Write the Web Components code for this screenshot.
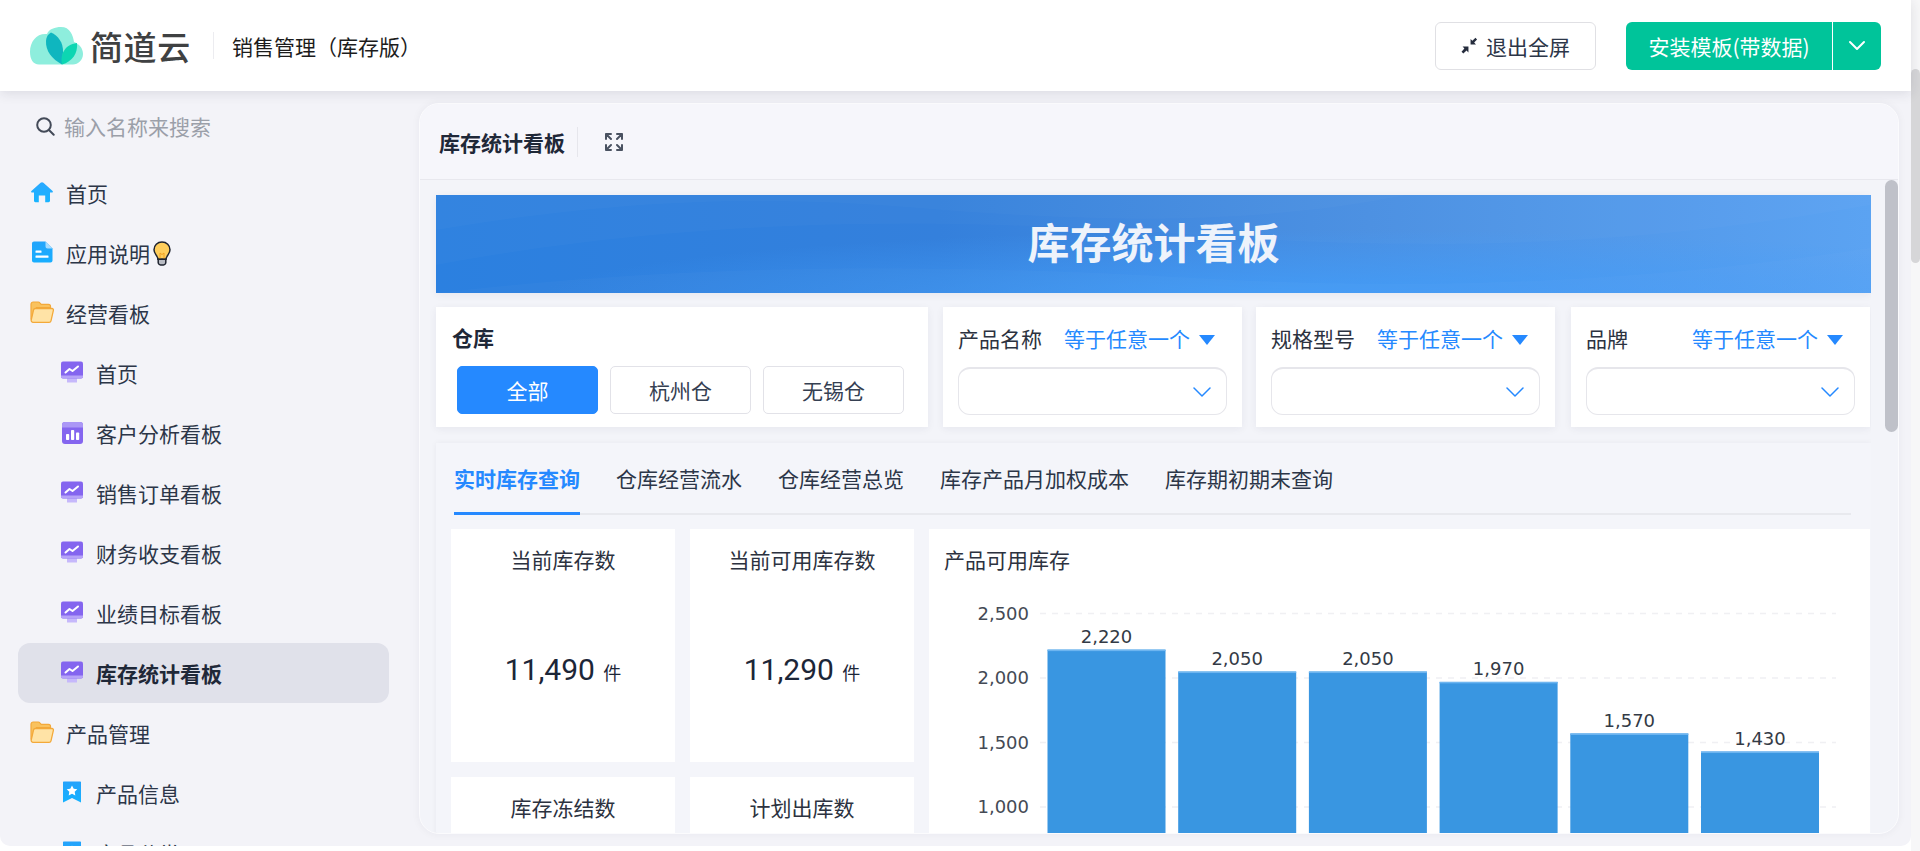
<!DOCTYPE html>
<html lang="zh-CN">
<head>
<meta charset="utf-8">
<title>库存统计看板</title>
<style>
  html, body { margin: 0; height: 851px; overflow: hidden; background: #fff; }
  body { display: flex; font-family: "Noto Sans CJK SC", "Noto Sans", sans-serif; font-size: 21px; color: #2c3648; }
  #page { width: 1911px; display: flex; flex-direction: column; }
</style>
</head>
<body>
<div id="page">
  <app-header title-text="销售管理（库存版）"></app-header>
  <app-shell>
    <side-nav slot="side">
      <nav-item icon="home">首页</nav-item>
      <nav-item icon="doc">应用说明<icon-bulb></icon-bulb></nav-item>
      <nav-item icon="folder">经营看板</nav-item>
      <nav-item icon="monitor" level="2">首页</nav-item>
      <nav-item icon="bars" level="2">客户分析看板</nav-item>
      <nav-item icon="monitor" level="2">销售订单看板</nav-item>
      <nav-item icon="monitor" level="2">财务收支看板</nav-item>
      <nav-item icon="monitor" level="2">业绩目标看板</nav-item>
      <nav-item icon="monitor" level="2" active>库存统计看板</nav-item>
      <nav-item icon="folder">产品管理</nav-item>
      <nav-item icon="bookmark" level="2">产品信息</nav-item>
      <nav-item icon="bookmark" level="2">产品分类</nav-item>
    </side-nav>
    <board-card title-text="库存统计看板">
      <board-banner>库存统计看板</board-banner>
      <filter-row>
        <filter-buttons label="仓库" options="全部,杭州仓,无锡仓"></filter-buttons>
        <filter-select label="产品名称"></filter-select>
        <filter-select label="规格型号" style="margin: 0 1px 0 -1px"></filter-select>
        <filter-select label="品牌"></filter-select>
      </filter-row>
      <tab-panel tabs="实时库存查询,仓库经营流水,仓库经营总览,库存产品月加权成本,库存期初期末查询">
        <stat-card label="当前库存数" value="11,490" unit="件"></stat-card>
        <stat-card label="当前可用库存数" value="11,290" unit="件"></stat-card>
        <bar-chart label="产品可用库存" values="2220,2050,2050,1970,1570,1430"></bar-chart>
        <stat-card label="库存冻结数"></stat-card>
        <stat-card label="计划出库数"></stat-card>
      </tab-panel>
    </board-card>
  </app-shell>
</div>
<page-scrollbar></page-scrollbar>

<script>
// Sidebar icons, all on a 24 x 24 box
const ICONS = {
  home: `<defs><linearGradient id="g" x1="0" y1="0" x2="0" y2="1"><stop offset="0" stop-color="#2aa8ff"/><stop offset="1" stop-color="#18b4ff"/></linearGradient></defs>
    <path fill="url(#g)" d="M10.6 2.8c.8-.7 2-.7 2.8 0l9.2 8.2c.6.6.2 1.6-.7 1.6H20v8.2c0 .8-.6 1.4-1.4 1.4h-3.4v-6.6H8.8v6.6H5.4c-.8 0-1.4-.6-1.4-1.4v-8.2H2.100c-.9 0-1.300-1-.7-1.600z"/>`,
  doc: `<defs><linearGradient id="g" x1="0" y1="0" x2="0" y2="1"><stop offset="0" stop-color="#22a4fb"/><stop offset="1" stop-color="#18aeff"/></linearGradient></defs>
    <path fill="url(#g)" d="M4 1.500h11.500L22.500 8.500V20.500c0 1.100-.9 2-2 2H4c-1.100 0-2-.9-2-2v-17c0-1.100.9-2 2-2z"/>
    <path fill="#a5dcff" d="M15.500 1.500l7 7h-5c-1.100 0-2-.9-2-2z"/>
    <rect x="5.500" y="10.500" width="6" height="2.200" rx=".5" fill="#fff"/><rect x="5.500" y="15.500" width="13" height="2.200" rx=".5" fill="#fff"/>`,
  folder: `<path fill="#f9c25f" stroke="#f3a93a" stroke-width="1.200" d="M1 19.500V4.200C1 3 2 2 3.200 2h5c.7 0 1.300.3 1.700.8l1.300 1.500h7.300c1.100 0 2 .9 2 2v1.200H6.500z"/>
    <path fill="#ffe3a6" stroke="#f3a93a" stroke-width="1.300" stroke-linejoin="round" d="M5.500 8.500h16.500c1 0 1.600.9 1.400 1.800L21 20.800c-.2.900-1 1.500-1.900 1.500H3c-1.100 0-2-1-1.800-2.100L3.500 10c.2-.9 1-1.500 2-1.500z"/>`,
  monitor: `<path fill="#c6b8fb" d="M7 18h10v4.500H7z"/><rect x="1" y="1.500" width="22" height="17" rx="2" fill="#8465ef"/><path fill="#b6a3f8" d="M1 15.500h22v1c0 1.100-.9 2-2 2H3c-1.100 0-2-.9-2-2z"/>
    <path fill="none" stroke="#fff" stroke-width="2" stroke-linecap="round" stroke-linejoin="round" d="M5.500 12.500l4-3.500 3 2 5.500-4.500"/>`,
  bars: `<rect x="2" y="2" width="21" height="22" rx="3" fill="#8465ef"/><path fill="#ab97f6" d="M5 2h15a3 3 0 0 1 3 3v2.500H2V5a3 3 0 0 1 3-3z"/>
    <rect x="6" y="14" width="3.200" height="6" rx=".8" fill="#fff"/><rect x="11" y="10" width="3.200" height="10" rx=".8" fill="#fff"/><rect x="16" y="12.500" width="3.200" height="7.500" rx=".8" fill="#fff"/>`,
  bookmark: `<defs><linearGradient id="g" x1="0" y1="0" x2="0" y2="1"><stop offset="0" stop-color="#25a2fb"/><stop offset="1" stop-color="#16b2ff"/></linearGradient></defs>
    <path fill="url(#g)" d="M4 1.500h16c.6 0 1 .4 1 1v20l-9-4.500-9 4.500v-20c0-.6.4-1 1-1z"/>
    <path fill="#fff" d="M12 5.500l1.700 3.200 3.600.6-2.600 2.500.6 3.600-3.300-1.700-3.300 1.700.6-3.600-2.600-2.500 3.600-.6z"/>`
};

class AppHeader extends HTMLElement {
  constructor() {
    super();
    this.attachShadow({ mode: 'open' });
  }

  connectedCallback() {
    this.shadowRoot.innerHTML = `
      <style>
        :host { display: flex; align-items: center; height: 91px; padding: 0 30px; box-sizing: border-box; background: #fff; box-shadow: 0 2px 12px rgba(30, 35, 60, .12); position: relative; z-index: 2; }
        .brand { font-size: 33px; font-weight: 500; line-height: 40px; color: #3f4142; letter-spacing: .6px; margin-left: 7px; width: 100px; white-space: nowrap; }
        .sep { width: 1px; height: 27px; background: #ececf0; margin: 0 18px 0 23px; }
        .title { font-size: 21px; line-height: 32px; color: #1c1c1c; flex: 1; }
        button { font: inherit; height: 48px; box-sizing: border-box; border-radius: 6px; cursor: pointer; display: flex; align-items: center; justify-content: center; padding: 0; }
        .exit { width: 161px; background: #fff; border: 1.5px solid #e0e0e4; color: #2c3648; gap: 8px; margin-right: 30px; }
        .install { width: 255px; background: #00c49a; border: 0; color: #fff; }
        .install span { width: 206px; text-align: center; border-right: 1.5px solid #fff; line-height: 48px; }
        .install i { flex: 1; display: flex; justify-content: center; }
      </style>
      <svg width="53" height="38" viewBox="0 0 53 38">
        <path fill="#8eeedd" d="M9 37.500C3 37.500 0 32 0 25 0 14 7 6 17 7 19 2 25 0 31 0c9 0 12 8 13 15 5 2 9 6 9 12 0 6-5 10.500-10 10.500z"/>
        <path fill="#0fb6bf" d="M32 37.500C22 32 15.500 24 16 14c.2-4 2-7 5-8.500 7 3 12.500 10 12 20-.2 4-.5 8-1 12z"/>
        <path fill="#0dd6b2" d="M32 37.500c-2-9 2-20 15-21.500 1 10-4.500 18.500-15 21.500z"/>
      </svg>
      <div class="brand">简道云</div>
      <div class="sep"></div>
      <div class="title">${this.getAttribute('title-text')}</div>
      <button class="exit">
        <svg width="17" height="17" viewBox="0 0 16 16" fill="#252c3d"><path d="M9 7V1.800l1.700 1.700L13.600 .8l1.500 1.500-2.700 2.900L14.100 7z"/><path d="M7 9v5.500l-1.800-1.700-3 2.700-1.700-1.700 2.700-3L1.500 9z"/></svg>
        <span>退出全屏</span>
      </button>
      <button class="install">
        <span>安装模板(带数据)</span>
        <i><svg width="18" height="11" viewBox="0 0 18 11" fill="none" stroke="#fff" stroke-width="2" stroke-linecap="round" stroke-linejoin="round"><path d="M2 2l7 7 7-7"/></svg></i>
      </button>
    `;
  }
}

class AppShell extends HTMLElement {
  constructor() {
    super();
    this.attachShadow({ mode: 'open' });
    this.shadowRoot.innerHTML = `
      <style>
        :host { display: flex; height: 755px; background: #f3f3f8; border-radius: 0 0 10px 10px; overflow: hidden; }
      </style>
      <slot name="side"></slot>
      <slot></slot>
    `;
  }
}

class SideNav extends HTMLElement {
  constructor() {
    super();
    this.attachShadow({ mode: 'open' });
    this.shadowRoot.innerHTML = `
      <style>
        :host { display: block; width: 419px; flex: none; box-sizing: border-box; overflow: hidden; }
        .search { display: flex; align-items: center; height: 72px; padding-left: 36px; box-sizing: border-box; gap: 9px; font-size: 21px; color: #9b9fa9; }
        .search span { margin-bottom: 3px; }
        .search svg { margin-bottom: 1px; }
        .list { padding-left: 18px; width: 389px; box-sizing: border-box; }
      </style>
      <div class="search">
        <svg width="19" height="19" viewBox="0 0 19 19" fill="none" stroke="#434a58" stroke-width="2" stroke-linecap="round"><circle cx="8" cy="8" r="6.800"/><path d="M13.200 13.200l4.500 4.500"/></svg>
        <span>输入名称来搜索</span>
      </div>
      <div class="list"><slot></slot></div>
    `;
  }
}

class NavItem extends HTMLElement {
  constructor() {
    super();
    this.attachShadow({ mode: 'open' });
  }

  connectedCallback() {
    const icon = ICONS[this.getAttribute('icon')] || '';
    this.shadowRoot.innerHTML = `
      <style>
        :host { display: flex; align-items: center; height: 60px; padding-left: 12px; gap: 12px; border-radius: 12px; color: #2c3648; line-height: 32px; white-space: nowrap; }
        :host([level="2"]) { padding-left: 42px; }
        :host([active]) { background: #e0e1ea; font-weight: 700; color: #1f2838; }
        svg { flex: none; margin-bottom: 3px; }
        .text { display: flex; align-items: center; }
      </style>
      <svg width="24" height="24" viewBox="0 0 24 24">${icon}</svg>
      <span class="text"><slot></slot></span>
    `;
  }
}

class IconBulb extends HTMLElement {
  constructor() {
    super();
    this.attachShadow({ mode: 'open' });
    this.shadowRoot.innerHTML = `
      <style>:host { display: inline-flex; margin-left: 3px; }</style>
      <svg width="18" height="25" viewBox="0 0 18 25">
        <path fill="#ffce5c" stroke="#1f2430" stroke-width="1.500" d="M9 1C4.400 1 1 4.500 1 8.700c0 3.300 2.300 5 3.300 7.300.4.800.5 1.500.6 2.200h8.200c.1-.7.200-1.400.6-2.200 1-2.300 3.300-4 3.300-7.300C17 4.500 13.600 1 9 1z"/>
        <path fill="none" stroke="#f0a020" stroke-width="1" d="M7 18v-6l2 1.500 2-1.500v6"/>
        <path fill="#b9bcc4" stroke="#1f2430" stroke-width="1.500" d="M5.200 18.300h7.600v3.200c0 1-1 2.500-2.300 2.500h-3c-1.300 0-2.300-1.500-2.300-2.500z"/>
      </svg>
    `;
  }
}

class BoardCard extends HTMLElement {
  constructor() {
    super();
    this.attachShadow({ mode: 'open' });
  }

  connectedCallback() {
    this.shadowRoot.innerHTML = `
      <style>
        :host { display: flex; flex-direction: column; width: 1480px; height: 731px; margin-top: 12px; box-sizing: border-box; background: #f3f4f9; border: 1px solid #fbfbfd; border-radius: 20px; overflow: hidden; box-shadow: 0 0 8px rgba(30, 35, 60, .05); }
        header { display: flex; align-items: center; height: 75px; flex: none; background: #f6f6fb; border-bottom: 1.5px solid #e8e8ee; padding-left: 19px; }
        h1 { margin: 0; font-size: 21px; line-height: 32px; font-weight: 700; color: #1f2838; }
        .sep { width: 1px; height: 30px; background: #e6e6ec; margin: 0 27px 0 12px; }
        .body { flex: 1; min-height: 0; display: flex; }
        .content { width: 1451px; flex: none; box-sizing: border-box; padding: 15px 0 0 16px; overflow: hidden; display: flex; flex-direction: column; gap: 15px; }
        .thumb { width: 13px; height: 252px; border-radius: 7px; background: #bfc1c9; margin-left: 14px; }
      </style>
      <header>
        <h1>${this.getAttribute('title-text')}</h1>
        <div class="sep"></div>
        <svg width="18" height="18" viewBox="0 0 18 18" fill="none" stroke="#4a5261" stroke-width="2" stroke-linecap="round" stroke-linejoin="round">
          <path d="M1 6V1h5M1 1l5 5M12 1h5v5M17 1l-5 5M1 12v5h5M1 17l5-5M17 12v5h-5M17 17l-5-5"/>
        </svg>
      </header>
      <div class="body">
        <div class="content"><slot></slot></div>
        <div class="thumb"></div>
      </div>
    `;
  }
}

class BoardBanner extends HTMLElement {
  constructor() {
    super();
    this.attachShadow({ mode: 'open' });
    this.shadowRoot.innerHTML = `
      <style>
        :host { display: flex; align-items: center; justify-content: center; height: 98px; flex: none; position: relative; overflow: hidden;
          background: radial-gradient(ellipse 55% 70% at 62% 105%, rgba(66, 158, 250, .85), rgba(66, 158, 250, 0)), linear-gradient(90deg, #2b80e0 0%, #3480dc 35%, #4a8fe2 65%, #5ba3f2 100%);
          box-shadow: 0 2px 8px rgba(30, 35, 60, .06); font-size: 42px; font-weight: 700; color: #eef3fb; line-height: 56px; }
        svg { position: absolute; inset: 0; }
        span { position: relative; margin-bottom: 7px; }
      </style>
      <svg width="1434" height="98" viewBox="0 0 1434 98" preserveAspectRatio="none" fill="#fff">
        <path opacity=".02" d="M0 35C180 5 320 0 470 12c180 15 340 20 500-12H0z"/>
        <path opacity=".02" d="M0 70c240-45 480-50 760-30 240 18 450 10 674-30V0H0z"/>
        <path opacity=".02" d="M0 98c260-30 500-30 760-15 260 15 480 0 674-30v45z"/>
      </svg>
      <span><slot></slot></span>
    `;
  }
}

class FilterRow extends HTMLElement {
  constructor() {
    super();
    this.attachShadow({ mode: 'open' });
    this.shadowRoot.innerHTML = `
      <style>
        :host { display: grid; grid-template-columns: 492px repeat(3, 299px); column-gap: 15px; height: 120px; flex: none; margin-top: -1px; }
      </style>
      <slot></slot>
    `;
  }
}

class FilterButtons extends HTMLElement {
  constructor() {
    super();
    this.attachShadow({ mode: 'open' });
  }

  connectedCallback() {
    const options = this.getAttribute('options').split(',');
    this.shadowRoot.innerHTML = `
      <style>
        :host { display: block; background: #fff; box-shadow: 0 2px 8px rgba(30, 35, 60, .06); padding: 14px 0 0 16px; box-sizing: border-box; }
        .label { font-weight: 700; line-height: 32px; color: #1f2838; height: 45px; }
        .opts { display: flex; gap: 12px; margin-left: 5px; }
        .opt { width: 141px; height: 48px; box-sizing: border-box; border: 1.5px solid #e2e2e8; border-radius: 5px; display: flex; align-items: center; justify-content: center; color: #354052; }
        .opt.on { background: #2589ff; border-color: #2589ff; color: #fff; }
      </style>
      <div class="label">${this.getAttribute('label')}</div>
      <div class="opts">
        ${options.map((o, i) => `<div class="opt${i === 0 ? ' on' : ''}">${o}</div>`).join('')}
      </div>
    `;
  }
}

class FilterSelect extends HTMLElement {
  constructor() {
    super();
    this.attachShadow({ mode: 'open' });
  }

  connectedCallback() {
    this.shadowRoot.innerHTML = `
      <style>
        :host { display: block; background: #fff; box-shadow: 0 2px 8px rgba(30, 35, 60, .06); padding: 15px 15px 0 15px; box-sizing: border-box; }
        .top { display: flex; align-items: center; height: 32px; line-height: 32px; margin-bottom: 13px; color: #2c3240; }
        .label { width: 106px; flex: none; }
        .op { color: #2589ff; display: flex; align-items: center; gap: 9px; }
        .op i { width: 0; height: 0; border: 8px solid transparent; border-top: 10px solid #2589ff; border-bottom: 0; margin-top: 3px; }
        .box { height: 48px; box-sizing: border-box; border: 1.5px solid #e6e6eb; border-top-width: 2px; border-radius: 12px; background: #fff; display: flex; align-items: center; justify-content: flex-end; padding-right: 15px; }
      </style>
      <div class="top">
        <span class="label">${this.getAttribute('label')}</span>
        <span class="op">等于任意一个<i></i></span>
      </div>
      <div class="box">
        <svg width="18" height="10" viewBox="0 0 18 10" fill="none" stroke="#2589ff" stroke-width="1.500" stroke-linecap="round" stroke-linejoin="round"><path d="M1 1l8 8 8-8"/></svg>
      </div>
    `;
  }
}

class TabPanel extends HTMLElement {
  constructor() {
    super();
    this.attachShadow({ mode: 'open' });
  }

  connectedCallback() {
    const tabs = this.getAttribute('tabs').split(',');
    this.shadowRoot.innerHTML = `
      <style>
        :host { display: block; flex: none; margin-top: 1px; background: #f4f5fa; box-shadow: 0 0 6px rgba(30, 35, 60, .05); }
        .tabs { display: flex; gap: 36px; height: 72px; margin: 0 20px 0 18px; border-bottom: 2px solid #e8e9ee; box-sizing: border-box; }
        .tab { height: 70px; line-height: 70px; box-sizing: border-box; color: #2c3648; white-space: nowrap; }
        .tab.on { color: #2589ff; font-weight: 700; border-bottom: 3px solid #2589ff; margin-bottom: -2px; height: 72px; }
        .grid { display: grid; grid-template-columns: 224px 224px 941px; grid-auto-rows: 233px; gap: 15px; padding: 14px 0 0 15px; }
      </style>
      <div class="tabs">
        ${tabs.map((t, i) => `<div class="tab${i === 0 ? ' on' : ''}">${t}</div>`).join('')}
      </div>
      <div class="grid"><slot></slot></div>
    `;
  }
}

class StatCard extends HTMLElement {
  constructor() {
    super();
    this.attachShadow({ mode: 'open' });
  }

  connectedCallback() {
    const value = this.getAttribute('value');
    this.shadowRoot.innerHTML = `
      <style>
        :host { display: block; background: #fff; padding-top: 14px; box-sizing: border-box; text-align: center; color: #2c3240; }
        .label { line-height: 32px; }
        .value { margin-top: 75px; line-height: 40px; font-family: Roboto, "Noto Sans CJK SC", sans-serif; font-size: 30px; color: #1c2638; }
        .unit { font-family: "Noto Sans CJK SC", sans-serif; font-size: 18px; margin-left: 1px; }
      </style>
      <div class="label">${this.getAttribute('label')}</div>
      ${value ? `<div class="value">${value} <span class="unit">${this.getAttribute('unit')}</span></div>` : ''}
    `;
  }
}

class BarChart extends HTMLElement {
  constructor() {
    super();
    this.attachShadow({ mode: 'open' });
  }

  connectedCallback() {
    const values = this.getAttribute('values').split(',').map(Number);
    const yOf = v => 20.5 + (2500 - v) * 64.5 / 500;
    const fmt = v => v.toLocaleString('en-US');

    const grid = [2500, 2000, 1500, 1000].map(v => `
      <line x1="111" x2="907" y1="${yOf(v)}" y2="${yOf(v)}" stroke="#f0f0f3" stroke-width="1.500" stroke-dasharray="6 6"/>
      <text x="100" y="${yOf(v) + 6}" text-anchor="end" fill="#444a55">${fmt(v)}</text>`).join('');

    const bars = values.map((v, i) => {
      const x = 118.500 + i * 130.700;
      return `
      <rect x="${x}" y="${yOf(v)}" width="118" height="400" fill="#3996e1"/>
      <rect x="${x}" y="${yOf(v)}" width="118" height="1.500" fill="#6db5f0"/>
      <text x="${x + 59}" y="${yOf(v) - 6.500}" text-anchor="middle" fill="#333a45">${fmt(v)}</text>`;
    }).join('');

    this.shadowRoot.innerHTML = `
      <style>
        :host { display: block; grid-row: span 2; background: #fff; color: #2c3240; }
        .label { line-height: 32px; padding: 14px 0 18px 15px; }
        svg { display: block; }
        text { font-family: "DejaVu Sans", sans-serif; font-size: 18px; }
      </style>
      <div class="label">${this.getAttribute('label')}</div>
      <svg width="941" height="400" viewBox="0 0 941 400">${grid}${bars}</svg>
    `;
  }
}

class PageScrollbar extends HTMLElement {
  constructor() {
    super();
    this.attachShadow({ mode: 'open' });
    this.shadowRoot.innerHTML = `
      <style>
        :host { display: block; width: 9px; height: 851px; flex: none; background: #f7f7f8; padding-top: 69px; box-sizing: border-box; }
        div { height: 194px; border-radius: 5px; background: #d6d6d8; }
      </style>
      <div></div>
    `;
  }
}

customElements.define('app-header', AppHeader);
customElements.define('app-shell', AppShell);
customElements.define('side-nav', SideNav);
customElements.define('nav-item', NavItem);
customElements.define('icon-bulb', IconBulb);
customElements.define('board-card', BoardCard);
customElements.define('board-banner', BoardBanner);
customElements.define('filter-row', FilterRow);
customElements.define('filter-buttons', FilterButtons);
customElements.define('filter-select', FilterSelect);
customElements.define('tab-panel', TabPanel);
customElements.define('stat-card', StatCard);
customElements.define('bar-chart', BarChart);
customElements.define('page-scrollbar', PageScrollbar);
</script>
</body>
</html>
